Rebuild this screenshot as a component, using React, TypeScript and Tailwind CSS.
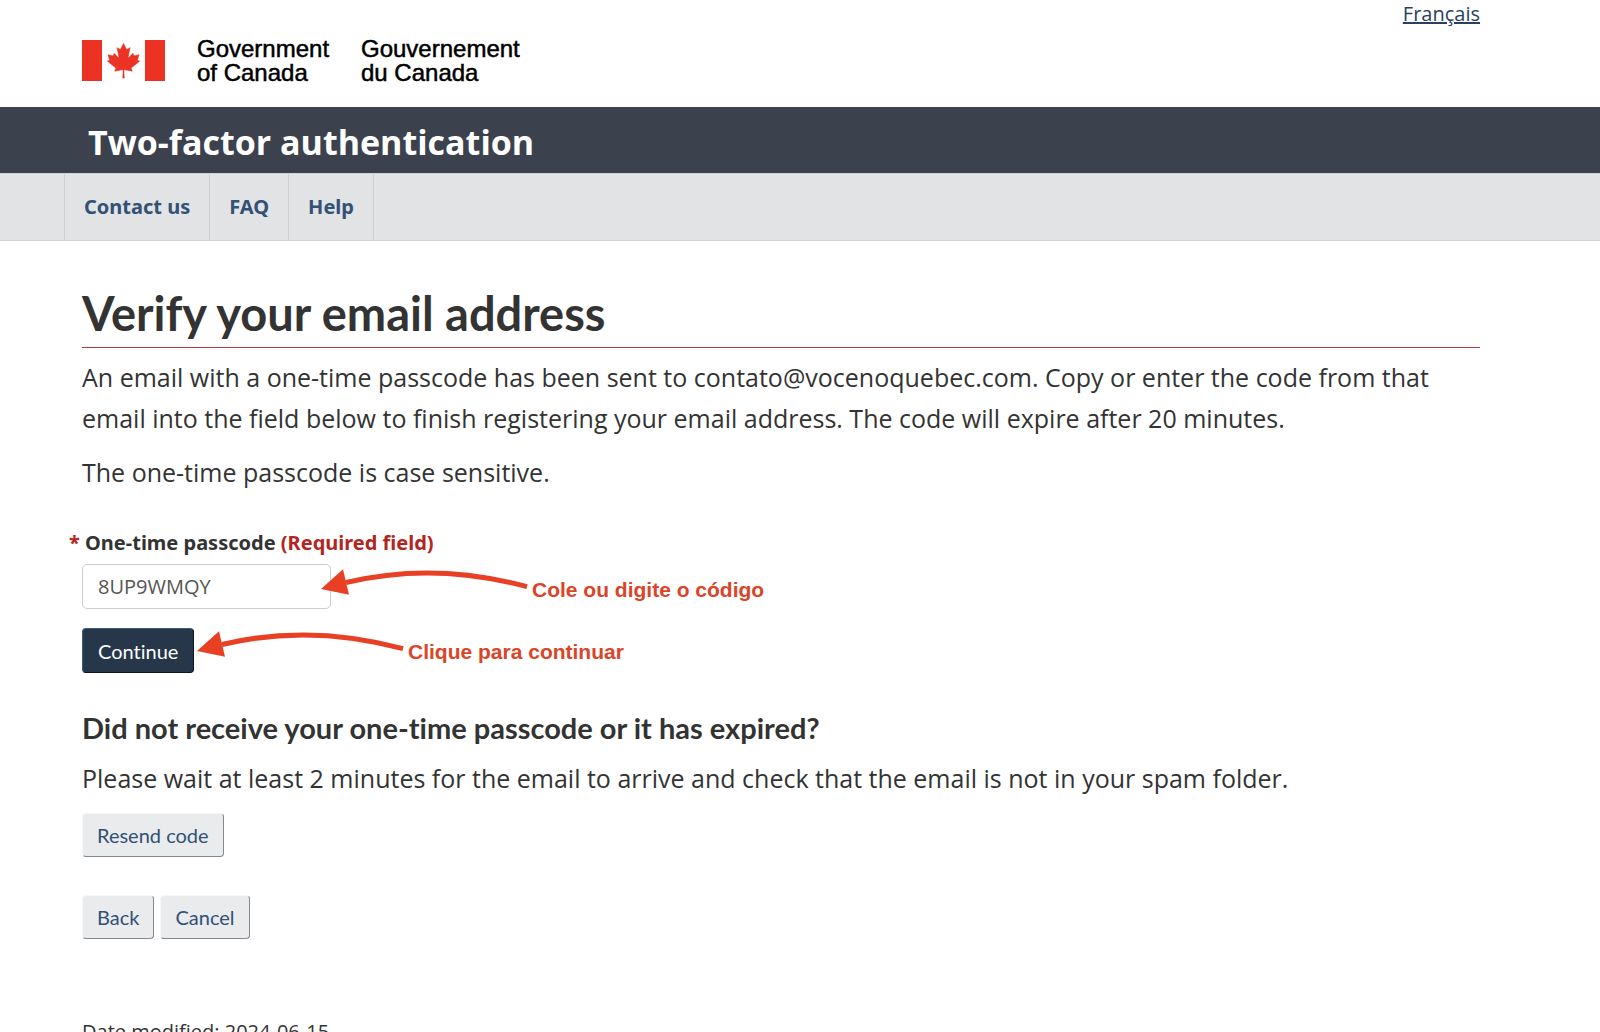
import { useState } from 'react';

const navLinks = ['Contact us', 'FAQ', 'Help'];

const GovernmentLogo: React.FC = () => (
  <svg width="450" height="60" viewBox="0 0 450 60" role="img" aria-label="Government of Canada / Gouvernement du Canada">
    <g fill="#eb3223">
      <rect x="0" y="4" width="20" height="41" />
      <rect x="63" y="4" width="20" height="41" />
      <path
        transform="translate(0 4) scale(0.00865 0.0086)"
        stroke="#eb3223"
        strokeWidth="60"
        d="m4890 4430-45-863a95 95 0 0 1 111-98l859 151-116-320a65 65 0 0 1 20-73l941-762-212-99a65 65 0 0 1-34-79l186-572-542 115a65 65 0 0 1-73-38l-105-247-423 454a65 65 0 0 1-111-57l204-1052-327 189a65 65 0 0 1-91-27l-332-652-332 652a65 65 0 0 1-91 27l-327-189 204 1052a65 65 0 0 1-111 57l-423-454-105 247a65 65 0 0 1-73 38l-542-115 186 572a65 65 0 0 1-34 79l-212 99 941 762a65 65 0 0 1 20 73l-116 320 859-151a95 95 0 0 1 111 98l-45 863z"
      />
    </g>
    <g fill="#000" stroke="#000" strokeWidth="0.5" fontFamily="'Liberation Sans', Arial, sans-serif" fontSize="24">
      <text x="115" y="21">Government</text>
      <text x="115" y="45">of Canada</text>
      <text x="279" y="21">Gouvernement</text>
      <text x="279" y="45">du Canada</text>
    </g>
  </svg>
);

const Annotation: React.FC<{ text: string; className: string }> = ({ text, className }) => (
  <div className={`absolute flex items-start pointer-events-none ${className}`}>
    <svg className="shrink-0" width="212" height="40" viewBox="0 0 212 40" fill="none" aria-hidden="true">
      <path d="M26 18.5Q114 -2.6 207 22.7" stroke="#e84025" strokeWidth="5" />
      <path d="M1 25 23 5.3 29 30.7Z" fill="#e84025" />
    </svg>
    <span className="pt-3 font-['Liberation_Sans',Arial,sans-serif] text-[21px] leading-7 font-bold whitespace-nowrap text-[#dc4427]">
      {text}
    </span>
  </div>
);

const SecondaryButton: React.FC<{ children: string }> = ({ children }) => (
  <button
    type="button"
    className="h-11 rounded border border-t-[#f6f7f8] border-l-[#f6f7f8] border-r-[#85878a] border-b-[#85878a] bg-[#eaebed] px-[14px] font-[Lato,sans-serif] text-[20px] text-[#335075] cursor-pointer"
  >
    {children}
  </button>
);

const App: React.FC = () => {
  const [ passcode, setPasscode ] = useState<string>('8UP9WMQY');

  return (
    <div className="bg-white font-['Open_Sans','Noto_Sans',sans-serif] text-[#333] [font-variant-ligatures:none]">
      <header>
        <div className="flex h-[107px] justify-between pl-[82px] pr-[120px]">
          <div className="pt-9">
            <GovernmentLogo />
          </div>
          <a href="#fr" className="text-[20px] leading-7 text-[#284162] underline">Français</a>
        </div>
        <div className="bg-[#3b414d] pt-1 pl-[88px] text-[34px] leading-[62px] font-bold text-white">
          Two-factor authentication
        </div>
        <nav className="border-t border-b border-[#d0d3d6] bg-[#e1e3e5] pl-16">
          <ul className="flex font-['Noto_Sans',sans-serif]">
            {navLinks.map((label) => (
              <li key={label} className="border-r border-[#cdd1d4] first:border-l">
                <a href="#nav" className="block px-[19px] text-[20px] leading-[66px] font-bold text-[#335075]">{label}</a>
              </li>
            ))}
          </ul>
        </nav>
      </header>

      <main className="pl-[82px] pr-[120px] pt-10">
        <h1 className="border-b border-[#af3c43] pb-[2px] font-[Lato,sans-serif] text-[47px] leading-[64px] font-bold">
          Verify your email address
        </h1>
        <p className="mt-[9px] text-[25px] leading-[41px]">
          An email with a one-time passcode has been sent to contato@vocenoquebec.com. Copy or enter the code from that
          email into the field below to finish registering your email address. The code will expire after 20 minutes.
        </p>
        <p className="mt-[13px] text-[25px] leading-[41px]">The one-time passcode is case sensitive.</p>

        <form className="relative mt-9" onSubmit={(event) => event.preventDefault()}>
          <label htmlFor="passcode" className="-ml-[13px] block font-['Noto_Sans',sans-serif] text-[20px] leading-7 font-bold">
            <span className="text-[#b3251e]">*</span> One-time passcode <span className="text-[#b3251e]">(Required field)</span>
          </label>
          <input
            id="passcode"
            type="text"
            value={passcode}
            onChange={(event) => setPasscode(event.target.value)}
            className="mt-[7px] block h-[45px] w-[249px] rounded-[5px] border border-[#ccc] px-[15px] text-[20px] text-[#555]"
          />
          <button
            type="submit"
            className="mt-[19px] block h-[45px] rounded border border-t-[#3c5a7c] border-l-[#3c5a7c] border-r-[#0c1420] border-b-[#0c1420] bg-[#26374a] px-[15px] font-[Lato,sans-serif] text-[20px] text-white cursor-pointer"
          >
            Continue
          </button>
          <Annotation text="Cole ou digite o código" className="left-[238px] top-[35px]" />
          <Annotation text="Clique para continuar" className="left-[114px] top-[97px]" />
        </form>

        <h2 className="mt-[35px] font-[Lato,sans-serif] text-[29px] leading-10 font-bold">
          Did not receive your one-time passcode or it has expired?
        </h2>
        <p className="mt-[10px] text-[25px] leading-[41px]">
          Please wait at least 2 minutes for the email to arrive and check that the email is not in your spam folder.
        </p>
        <div className="mt-[14px]">
          <SecondaryButton>Resend code</SecondaryButton>
        </div>
        <div className="mt-[38px] flex gap-[6px]">
          <SecondaryButton>Back</SecondaryButton>
          <SecondaryButton>Cancel</SecondaryButton>
        </div>
        <p className="mt-[79px] text-[20px] leading-7">Date modified: 2024-06-15</p>
      </main>
    </div>
  );
};

export default App;
